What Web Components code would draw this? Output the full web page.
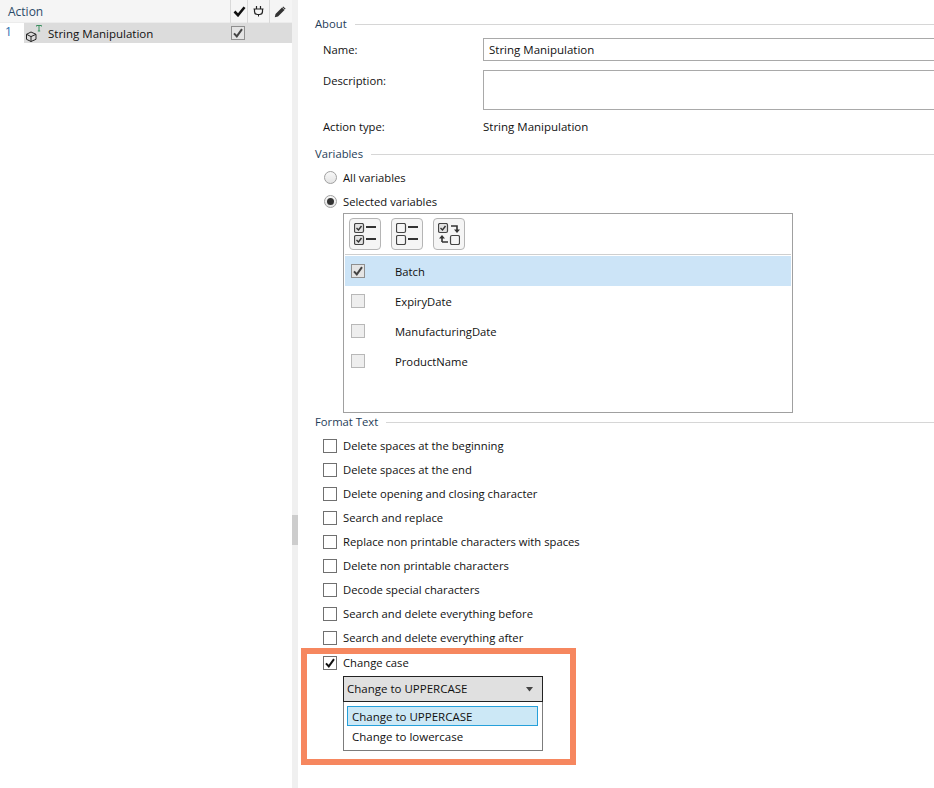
<!DOCTYPE html>
<html><head><meta charset="utf-8">
<style>
html,body{margin:0;padding:0;background:#fff;height:788px;overflow:hidden}
body{font:11.25px/16px "Open Sans","Noto Sans",sans-serif;color:#111}
</style></head>
<body>
<app-root></app-root>
<script>
const def=(n,html,init)=>customElements.define(n,class extends HTMLElement{constructor(){super();this.attachShadow({mode:'open'}).innerHTML=html}connectedCallback(){init&&init.call(this)}});
def('ui-check',`<style>:host{display:inline-flex;flex:none;width:12px;height:12px;border:1px solid #707070;background:#fff;align-items:center;justify-content:center}
:host([muted]){background:#e4e4e4;border-color:#8f8f8f}:host([light]){border-color:#b8b8b8;background:#eeeeee}
svg{display:none;width:12px;height:12px}:host([checked]) svg{display:block}
:host([muted]) path{stroke:#444}</style><svg viewBox="0 0 12 12"><path d="M2 6.300 4.800 9.400 10 2.200" fill="none" stroke="#111" stroke-width="2"/></svg>`);
def('ui-radio',`<style>:host{display:inline-flex;flex:none;width:11px;height:11px;border:1px solid #a0a0a0;border-radius:50%;background:linear-gradient(#f8f8f8,#e4e4e4);align-items:center;justify-content:center}
i{display:none;width:7px;height:7px;border-radius:50%;background:#333}:host([checked]) i{display:block}</style><i></i>`);
def('ui-section',`<style>:host{display:block}
.h{display:flex;align-items:center;gap:8px;height:16px;color:#1f3d58}
.h b{font-weight:400}.h i{flex:1;height:1px;background:#d6d6d6;margin-top:1px}</style>
<div class="h"><b><slot name="t"></slot></b><i></i></div><slot></slot>`);
def('opt-row',`<style>:host{display:flex;align-items:center;gap:6px;height:24px;padding-left:8px}</style><ui-check id="c"></ui-check><span><slot></slot></span>`,
function(){if(this.hasAttribute('checked'))this.shadowRoot.getElementById('c').setAttribute('checked','')});
def('tool-btn',`<style>:host{display:flex;width:30px;height:30px;border:1px solid #b5b5b5;border-radius:4px;background:#f5f5f5;align-items:center;justify-content:center}svg{display:block}</style><slot></slot>`);
def('var-row',`<style>:host{display:flex;align-items:center;height:30px;padding-left:6px}
:host([sel]){background:#cce4f7}span{margin-left:30px;padding-top:1px}</style><ui-check id="c" light></ui-check><span><slot></slot></span>`,
function(){if(this.hasAttribute('sel')){const c=this.shadowRoot.getElementById('c');c.setAttribute('checked','');c.setAttribute('muted','');c.removeAttribute('light')}});
const box=(x,y,on)=>`<rect x="${x+.5}" y="${y+.5}" width="9" height="9" rx="1.500" fill="${on?'#e2e2e2':'none'}" stroke="#444" stroke-width="1.200"/>`+(on?`<path d="M${x+2.5} ${y+5}l2 2 3-4" fill="none" stroke="#333" stroke-width="1.400"/>`:'');
const dash=(y)=>`<path d="M12 ${y}h10" stroke="#333" stroke-width="2"/>`;
const ic={all:`<svg width="22" height="22" viewBox="0 0 22 22">${box(0,0,1)}${dash(4)}${box(0,12,1)}${dash(16)}</svg>`,
none:`<svg width="22" height="22" viewBox="0 0 22 22">${box(0,0,0)}${dash(4)}${box(0,12,0)}${dash(16)}</svg>`,
inv:`<svg width="22" height="22" viewBox="0 0 22 22">${box(0,0,1)}${box(12,12,0)}<path d="M13 3h6v5M4 19h6M4 19v-5" fill="none" stroke="#333" stroke-width="1.600"/><path d="M16 6.500h6l-3 3.500zM1 15.500h6L4 12z" fill="#333"/></svg>`};
def('var-list',`<style>:host{display:block;width:450px;height:200px;border:1px solid #a0a0a0;margin-left:28px;box-sizing:border-box}
.t{display:flex;gap:10px;padding:4px 0 0 5px;height:40px;box-sizing:border-box}
.l{margin:0 1px;border-top:1px solid #cfcfcf;padding-top:1px}</style>
<div class="t"><tool-btn>${ic.all}</tool-btn><tool-btn>${ic.none}</tool-btn><tool-btn>${ic.inv}</tool-btn></div>
<div class="l"><var-row sel>Batch</var-row><var-row>ExpiryDate</var-row><var-row>ManufacturingDate</var-row><var-row>ProductName</var-row></div>`);
def('combo-open',`<style>:host{display:block;width:200px;margin-left:28px;font-size:11.5px}
.s{display:flex;align-items:center;justify-content:space-between;height:26px;border:1px solid #222;background:#e0e0e0;padding:0 8px 0 3px;box-sizing:border-box}
.s svg{display:block}
.p{border:1px solid #7c7c7c;border-top:0;height:49px;background:#fff;padding:4px 4px 0 3px;box-sizing:border-box}
.o{height:20px;line-height:20px;padding-left:4px;box-sizing:border-box;border:1px solid transparent}.o.a{background:#cce8f6;border-color:#26a0da}</style>
<div class="s"><span><slot></slot></span><svg width="9" height="5" viewBox="0 0 9 5"><path d="M1 0h7L4.500 4.500z" fill="#444"/></svg></div>
<div class="p"><div class="o a">Change to UPPERCASE</div><div class="o">Change to lowercase</div></div>`);
def('highlight-box',`<style>:host{display:block;position:absolute;left:301px;top:648px;width:275px;height:117px;box-sizing:border-box;border:6px solid #f6875f;pointer-events:none}</style>`);
def('action-pane',`<style>:host{display:block;width:292px;flex:none;height:100%}
.h{display:flex;height:23px;background:#f5f5f5;border-bottom:1px solid #ececec;box-sizing:border-box;color:#2b4a68;font-size:12px}
.h .a{flex:1;padding-left:8px;line-height:23px}.h .c{display:flex;align-items:center;justify-content:center;border-left:1px solid #d9d9d9;height:23px;box-sizing:border-box}
.r{display:flex;height:20px}.n{width:24px;padding-left:5px;box-sizing:border-box;color:#2b6fb0;line-height:18px;font-size:12px}
.m{flex:1;background:#dcdcdc;display:flex;align-items:center;position:relative;font-size:11.5px}
.m svg{margin-left:1px}.m span{margin-left:4px;padding-top:1px}.m ui-check{position:absolute;left:207px;top:3px}
</style>
<div class="h"><div class="a">Action</div><div class="c" style="width:17px"><svg width="13" height="11" viewBox="0 0 13 11"><path d="M1.500 5.500 5 9.200 11.500 1.200" fill="none" stroke="#111" stroke-width="2.600"/></svg></div>
<div class="c" style="width:22px;padding-right:1px"><svg width="13" height="13" viewBox="0 0 13 13"><path d="M4.500 1v2.500M8.500 1v2.500M1.500 4h10M2.500 4v2.500a3 3 0 0 0 3 3h2a3 3 0 0 0 3-3V4" fill="none" stroke="#222" stroke-width="1.200"/><path d="M6.500 9.500v2" stroke="#222"/></svg></div>
<div class="c" style="width:23px;padding-right:3px"><svg width="12" height="12" viewBox="0 0 12 12"><path d="M.8 11.200l.7-3.200 6.500-6.500 2.500 2.500L4 10.500z" fill="#333"/><path d="M8.800.8l2.400 2.400" stroke="#333" stroke-width="1.200"/></svg></div></div>
<div class="r"><div class="n">1</div><div class="m"><svg width="19" height="18" viewBox="0 0 19 18"><path d="M6 8 11 10.300V15.300L6 17.500 1.500 15.300V10.300ZM1.500 10.300 6 12.600 11 10.300M6 12.600v4.900" fill="none" stroke="#222"/><path d="M11.500 2.500V1.500h5V2.500M14 1.500V7M12.800 7h2.400" stroke="#3a8f5f" stroke-width="1" fill="none"/></svg><span>String Manipulation</span><ui-check checked muted></ui-check></div></div>`);
def('detail-pane',`<style>:host{display:block;flex:1;min-width:0;padding:16px 0 0 17px;box-sizing:border-box;overflow:hidden}
.f{display:grid;grid-template-columns:160px 1fr;padding-left:8px}
.sv{font-size:11.5px}
.in{height:23px;width:460px;border:1px solid #a9a9a9;box-sizing:border-box;line-height:22px;padding-left:5px}
.ta{height:40px;width:460px;border:1px solid #a9a9a9;box-sizing:border-box}
.rad{display:flex;align-items:center;gap:6px;height:24px;padding-left:9px}
.rad span{padding-top:1px}
</style>
<ui-section><span slot="t">About</span>
<div class="f" style="margin-top:6px;height:23px"><label style="line-height:24px">Name:</label><div class="in sv">String Manipulation</div></div>
<div class="f" style="margin-top:9px;height:40px"><label style="padding-top:3px">Description:</label><div class="ta"></div></div>
<div class="f" style="margin-top:9px;height:17px"><label>Action type:</label><div class="sv">String Manipulation</div></div>
</ui-section>
<ui-section style="margin-top:10px"><span slot="t">Variables</span>
<div class="rad" style="margin-top:3px"><ui-radio></ui-radio><span>All variables</span></div>
<div class="rad"><ui-radio checked></ui-radio><span>Selected variables</span></div>
<var-list></var-list></ui-section>
<ui-section style="margin-top:1px"><span slot="t">Format Text</span>
<div style="margin-top:4px"><opt-row>Delete spaces at the beginning</opt-row><opt-row>Delete spaces at the end</opt-row><opt-row>Delete opening and closing character</opt-row><opt-row>Search and replace</opt-row><opt-row>Replace non printable characters with spaces</opt-row><opt-row>Delete non printable characters</opt-row><opt-row>Decode special characters</opt-row><opt-row>Search and delete everything before</opt-row><opt-row>Search and delete everything after</opt-row><opt-row checked style="margin-top:1px">Change case</opt-row></div>
<combo-open style="margin-top:1px">Change to UPPERCASE</combo-open>
</ui-section>`);
def('app-root',`<style>:host{display:flex;height:788px;width:934px;position:relative;overflow:hidden}
.s{width:6px;flex:none;background:#f0f0f0;position:relative}.s i{position:absolute;left:0;top:515px;height:30px;width:6px;background:#cdcdcd}</style>
<action-pane></action-pane><div class="s"><i></i></div><detail-pane></detail-pane><highlight-box></highlight-box>`);
</script>
</body></html>
